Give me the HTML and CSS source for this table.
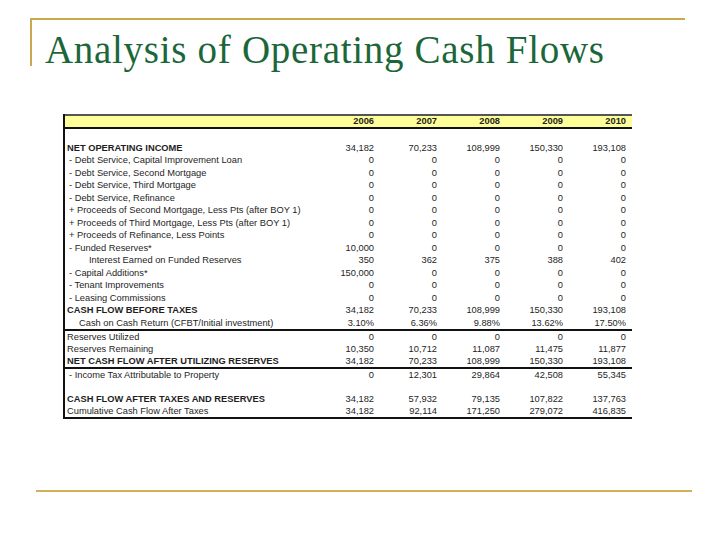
FILE: index.html
```html
<!DOCTYPE html>
<html>
<head>
<meta charset="utf-8">
<link rel="stylesheet" href="styles.css">
</head>
<body>
<div class="slide">
  <div class="frame">
    <h1 class="title">Analysis of Operating Cash Flows</h1>
  </div>

  <div class="sheet">
    <div class="row head"><span></span><span>2006</span><span>2007</span><span>2008</span><span>2009</span><span>2010</span></div>
    <div class="row"><span></span></div>
    <div class="row b"><span>NET OPERATING INCOME</span><span>34,182</span><span>70,233</span><span>108,999</span><span>150,330</span><span>193,108</span></div>
    <div class="row"><span class="i1">- Debt Service, Capital Improvement Loan</span><span>0</span><span>0</span><span>0</span><span>0</span><span>0</span></div>
    <div class="row"><span class="i1">- Debt Service, Second Mortgage</span><span>0</span><span>0</span><span>0</span><span>0</span><span>0</span></div>
    <div class="row"><span class="i1">- Debt Service, Third Mortgage</span><span>0</span><span>0</span><span>0</span><span>0</span><span>0</span></div>
    <div class="row"><span class="i1">- Debt Service, Refinance</span><span>0</span><span>0</span><span>0</span><span>0</span><span>0</span></div>
    <div class="row"><span class="i1">+ Proceeds of Second Mortgage, Less Pts (after BOY 1)</span><span>0</span><span>0</span><span>0</span><span>0</span><span>0</span></div>
    <div class="row"><span class="i1">+ Proceeds of Third Mortgage, Less Pts (after BOY 1)</span><span>0</span><span>0</span><span>0</span><span>0</span><span>0</span></div>
    <div class="row"><span class="i1">+ Proceeds of Refinance, Less Points</span><span>0</span><span>0</span><span>0</span><span>0</span><span>0</span></div>
    <div class="row"><span class="i1">- Funded Reserves*</span><span>10,000</span><span>0</span><span>0</span><span>0</span><span>0</span></div>
    <div class="row"><span class="i3">Interest Earned on Funded Reserves</span><span>350</span><span>362</span><span>375</span><span>388</span><span>402</span></div>
    <div class="row"><span class="i1">- Capital Additions*</span><span>150,000</span><span>0</span><span>0</span><span>0</span><span>0</span></div>
    <div class="row"><span class="i1">- Tenant Improvements</span><span>0</span><span>0</span><span>0</span><span>0</span><span>0</span></div>
    <div class="row"><span class="i1">- Leasing Commissions</span><span>0</span><span>0</span><span>0</span><span>0</span><span>0</span></div>
    <div class="row b"><span>CASH FLOW BEFORE TAXES</span><span>34,182</span><span>70,233</span><span>108,999</span><span>150,330</span><span>193,108</span></div>
    <div class="row rule"><span class="i2">Cash on Cash Return (CFBT/Initial investment)</span><span>3.10%</span><span>6.36%</span><span>9.88%</span><span>13.62%</span><span>17.50%</span></div>
    <div class="row sm"><span>Reserves Utilized</span><span>0</span><span>0</span><span>0</span><span>0</span><span>0</span></div>
    <div class="row sm"><span>Reserves Remaining</span><span>10,350</span><span>10,712</span><span>11,087</span><span>11,475</span><span>11,877</span></div>
    <div class="row sm b rule"><span>NET CASH FLOW AFTER UTILIZING RESERVES</span><span>34,182</span><span>70,233</span><span>108,999</span><span>150,330</span><span>193,108</span></div>
    <div class="row sm"><span class="i1">- Income Tax Attributable to Property</span><span>0</span><span>12,301</span><span>29,864</span><span>42,508</span><span>55,345</span></div>
    <div class="row sm"><span></span></div>
    <div class="row sm b"><span>CASH FLOW AFTER TAXES AND RESERVES</span><span>34,182</span><span>57,932</span><span>79,135</span><span>107,822</span><span>137,763</span></div>
    <div class="row sm rule"><span>Cumulative Cash Flow After Taxes</span><span>34,182</span><span>92,114</span><span>171,250</span><span>279,072</span><span>416,835</span></div>
  </div>

  <div class="footline"></div>
</div>
</body>
</html>
```

FILE: styles.css
```css
html, body {
  margin: 0;
  padding: 0;
  background: #ffffff;
}

.slide {
  width: 728px;
  height: 546px;
  overflow: hidden;
  display: flow-root;
}

.frame {
  margin-left: 30px;
  margin-top: 18px;
  width: 640px;
  height: 36px;
  border-top: 2px solid #c9a84e;
  border-left: 2px solid #c9a84e;
  padding-left: 13px;
  padding-top: 10px;
}

.title {
  margin: 0;
  font-family: "Liberation Serif", "Times New Roman", serif;
  font-weight: normal;
  font-size: 39px;
  line-height: 40px;
  letter-spacing: 0.7px;
  color: #1b673a;
  white-space: nowrap;
}

.sheet {
  margin-left: 63px;
  margin-top: 48px;
  width: 567px;
  border-left: 2px solid #111;
  font-family: "Liberation Sans", Arial, sans-serif;
  font-size: 9.3px;
  color: #1e1e1e;
}

.row {
  display: grid;
  grid-template-columns: 252px repeat(5, 63px);
  height: 12.5px;
  line-height: 12.5px;
  white-space: nowrap;
}

.row span {
  text-align: right;
  padding-right: 6px;
}

.row span:first-child {
  text-align: left;
  padding-right: 0;
  padding-left: 2px;
}

.row span.i1 { padding-left: 4px; }
.row span.i2 { padding-left: 14px; }
.row span.i3 { padding-left: 24px; }

.row.head {
  background: #ffff99;
  border-top: 2px solid #555;
  border-bottom: 2px solid #111;
  height: 11px;
  line-height: 11px;
  font-weight: bold;
}

.row.b span:first-child {
  font-weight: bold;
}

.row.sm {
  height: 12px;
  line-height: 12px;
}

.row.rule {
  border-bottom: 2px solid #111;
}

.footline {
  margin-left: 36px;
  margin-top: 71px;
  width: 656px;
  height: 2px;
  background: #d2b256;
}
```
